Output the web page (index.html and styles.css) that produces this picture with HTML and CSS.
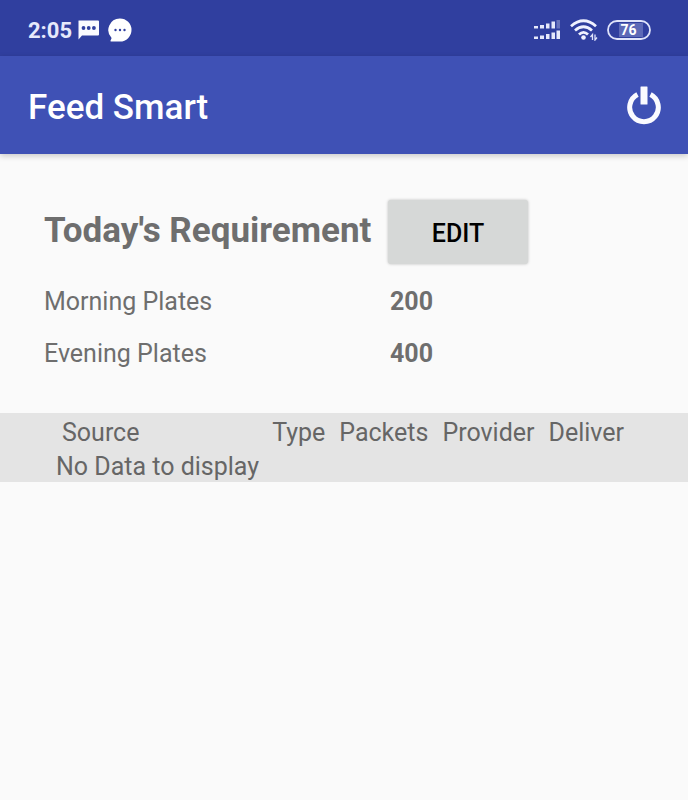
FILE: index.html
```html
<!DOCTYPE html>
<html lang="en">
<head>
<meta charset="utf-8">
<meta name="viewport" content="width=device-width, initial-scale=1">
<title>Feed Smart</title>
<link rel="stylesheet" href="styles.css">
</head>
<body>
<div class="app">
  <div class="status-bar">
    <div class="status-group">
      <span class="clock">2:05</span>
      <svg class="status-icon" width="22" height="22" viewBox="0 0 22 22" aria-hidden="true">
        <path fill="#fafaff" d="M1 1.500H20Q21 1.500 21 2.500V15.500Q21 16.500 20 16.500H4L0.500 20.500V2.500Q0 1.500 1 1.500Z"/>
        <g fill="#303f9f"><circle cx="5.500" cy="9" r="1.900"/><circle cx="10.700" cy="9" r="1.900"/><circle cx="15.900" cy="9" r="1.900"/></g>
      </svg>
      <svg class="status-icon bubble" width="24" height="24" viewBox="0 0 24 24" aria-hidden="true">
        <path fill="#fff" d="M12 0.500A11.500 11.500 0 1 1 12 23.500H3Q2 23.500 2.600 22.500L3.600 20A11.500 11.500 0 0 1 12 0.500Z"/>
        <g fill="#303f9f"><circle cx="7.500" cy="12" r="1.200"/><circle cx="12" cy="12" r="1.200"/><circle cx="16.500" cy="12" r="1.200"/></g>
      </svg>
    </div>
    <div class="status-group">
      <svg width="27" height="20" viewBox="0 0 27 20" aria-hidden="true">
        <g fill="#e6e9fb">
          <rect x="0" y="6" width="4" height="2.500"/><rect x="6" y="5" width="4" height="3.500"/><rect x="12" y="3.500" width="3.500" height="5"/><rect x="17.500" y="1.500" width="3.500" height="7"/>
          <rect x="0" y="16.500" width="4" height="2.500"/><rect x="6" y="15.500" width="4" height="3.500"/><rect x="12" y="14" width="3.500" height="5"/><rect x="17.500" y="12.500" width="3.500" height="6.500"/><rect x="22.500" y="10.500" width="3.500" height="8.500"/>
        </g>
        <rect x="22.500" y="0" width="3.500" height="8.500" fill="#6974bd"/>
      </svg>
      <svg class="wifi" width="28" height="22" viewBox="0 0 28 22" aria-hidden="true">
        <g fill="none" stroke="#f0f2ff" stroke-width="2.800">
          <path d="M1 7.200Q13.500 -3.600 26 7.200"/>
          <path d="M5 11.500Q13.500 4 22 11.500"/>
          <path d="M9 15.500Q13.500 11.200 18 15.500"/>
        </g>
        <circle cx="13.500" cy="18.500" r="2.300" fill="#f0f2ff"/>
        <g fill="none" stroke="#dfe3fa" stroke-width="1.300"><path d="M22.500 21V15.500L20.500 18"/><path d="M25 15.500V21L27 18.500"/></g>
      </svg>
      <svg class="battery" width="44" height="20" viewBox="0 0 44 20" role="img" aria-label="Battery 76 percent">
        <rect x="12" y="3" width="24" height="14" fill="#5d69b7"/>
        <rect x="1" y="1" width="42" height="18" rx="9" fill="none" stroke="#dfe3fa" stroke-width="1.800"/>
        <text class="battery-text" x="21.500" y="15" text-anchor="middle">76</text>
      </svg>
    </div>
  </div>

  <header class="app-bar">
    <h1 class="app-title">Feed Smart</h1>
    <button class="power" type="button" aria-label="Log out">
      <svg width="36" height="40" viewBox="0 0 36 40" aria-hidden="true">
        <path d="M11.500 8.600A14.300 14.300 0 1 0 24.500 8.600" fill="none" stroke="#fafaff" stroke-width="5"/>
        <rect x="13" y="0" width="10" height="21" fill="#3f51b5"/>
        <rect x="14.500" y="0.500" width="7" height="18" rx="0.500" fill="#fafaff"/>
      </svg>
    </button>
  </header>

  <main>
    <section class="requirement">
      <div class="row heading-row">
        <h2 class="heading">Today's Requirement</h2>
        <button class="edit" type="button">EDIT</button>
      </div>
      <dl class="plates">
        <div class="row"><dt>Morning Plates</dt><dd>200</dd></div>
        <div class="row"><dt>Evening Plates</dt><dd>400</dd></div>
      </dl>
    </section>

    <table class="sources">
      <thead>
        <tr><th class="source">Source</th><th>Type</th><th>Packets</th><th>Provider</th><th class="last">Deliver</th></tr>
      </thead>
      <tbody>
        <tr><td colspan="5">No Data to display</td></tr>
      </tbody>
    </table>
  </main>
</div>
</body>
</html>
```
FILE: styles.css
```css
* {
  box-sizing: border-box;
}

body {
  margin: 0;
  background: #fff;
  color: #6e6e6e;
  font-family: Roboto, "Liberation Sans", sans-serif;
  font-size: 25px;
  line-height: 34px;
}

.app {
  min-height: 100vh;
  margin-right: 10px;
  overflow: clip;
  background: #fafafa;
}

.status-bar {
  display: flex;
  align-items: center;
  justify-content: space-between;
  height: 56px;
  padding: 4px 37px 0 28px;
  background: #303f9f;
}

.status-group {
  display: flex;
  align-items: center;
}

.clock {
  padding-top: 2px;
  color: #e6e9fb;
  font-size: 22px;
  font-weight: 700;
}

.status-icon {
  margin-left: 6px;
}

.bubble {
  margin-left: 8px;
}

.wifi,
.battery {
  margin-left: 9px;
}

.battery-text {
  fill: #fff;
  font-size: 14px;
  font-weight: 700;
}

.app-bar {
  display: flex;
  align-items: center;
  justify-content: space-between;
  height: 98px;
  padding: 6px 26px 0 28px;
  background: #3f51b5;
  box-shadow: 0 2px 6px rgba(0, 0, 0, 0.2);
}

.app-title {
  margin: 0;
  color: #fff;
  font-size: 35px;
  font-weight: 500;
}

.power {
  display: flex;
  padding: 0 0 4px;
  border: 0;
  background: none;
}

.requirement {
  padding: 46px 20px 42px 44px;
}

.row {
  display: grid;
  grid-template-columns: 344px 1fr;
  align-items: center;
}

.heading-row {
  height: 64px;
}

.heading {
  margin: 0;
  padding-bottom: 2px;
  font-size: 35px;
  font-weight: 700;
  white-space: nowrap;
}

.edit {
  width: 140px;
  height: 64px;
  padding: 4px 0 0;
  border: 0;
  border-radius: 3px;
  background: #d6d8d7;
  box-shadow: 0 0 3px rgba(0, 0, 0, 0.25);
  color: #000;
  font: inherit;
  font-weight: 500;
}

.plates {
  display: grid;
  gap: 18px;
  margin: 21px 0 0;
}

.plates dd {
  margin: 0;
  padding-left: 2px;
  font-weight: 700;
}

.sources {
  width: 100%;
  border-collapse: collapse;
  background: #e4e4e4;
  color: #666;
  line-height: 30px;
}

.sources th {
  width: 1px;
  padding: 5px 14px 0 0;
  font-weight: 400;
  text-align: left;
  white-space: nowrap;
}

.sources .source {
  width: auto;
  padding-left: 62px;
}

.sources .last {
  padding-right: 64px;
}

.sources td {
  padding: 4px 0 0 56px;
}
```
